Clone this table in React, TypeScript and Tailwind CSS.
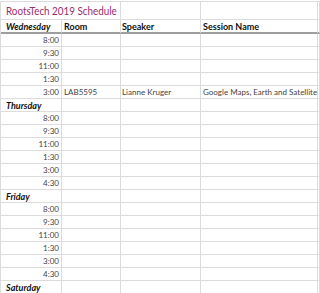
import React from "react";

type Row = { a: string; day?: boolean; b?: string; c?: string; d?: string };

const rows: Row[] = [
  { a: "8:00" },
  { a: "9:30" },
  { a: "11:00" },
  { a: "1:30" },
  { a: "3:00", b: "LAB5595", c: "Lianne Kruger", d: "Google Maps, Earth and Satellite" },
  { a: "Thursday", day: true },
  { a: "8:00" },
  { a: "9:30" },
  { a: "11:00" },
  { a: "1:30" },
  { a: "3:00" },
  { a: "4:30" },
  { a: "Friday", day: true },
  { a: "8:00" },
  { a: "9:30" },
  { a: "11:00" },
  { a: "1:30" },
  { a: "3:00" },
  { a: "4:30" },
  { a: "Saturday", day: true },
];

const cell = "border-r border-b border-[#dcdcdc] box-border overflow-visible whitespace-nowrap";
const hcell = "h-[14px] border-r border-[#dcdcdc] border-b-2 border-b-[#9e9e9e] flex items-center text-[9px] font-bold text-[#111] leading-none whitespace-nowrap";

export default function App() {
  return (
    <div
      className="w-[320px] h-[293px] overflow-hidden bg-white pt-[1px]"
      style={{ fontFamily: "Lato, 'Open Sans', sans-serif" }}
    >
      <div className="grid grid-cols-[61px_59px_80px_117px_1fr] border-t border-l border-[#dcdcdc]">
        {/* title row */}
        <div className={`col-span-2 h-[18px] ${cell} flex items-center pl-[5px] pt-[1px] leading-none`}>
          <span className="inline-block origin-left scale-x-[0.82] text-[12px] text-[#9c2d6b]">
            RootsTech 2019 Schedule
          </span>
        </div>
        <div className={`h-[18px] ${cell}`} />
        <div className={`h-[18px] ${cell}`} />
        <div className={`h-[18px] ${cell}`} />
        {/* header row */}
        <div className={`${hcell} pl-[5px] italic`}>Wednesday</div>
        <div className={`${hcell} pl-[2px]`}>Room</div>
        <div className={`${hcell} pl-[1px]`}>Speaker</div>
        <div className={`${hcell} pl-[2px]`}>Session Name</div>
        <div className="h-[14px] border-r border-[#dcdcdc] border-b-2 border-b-[#9e9e9e]" />
        {rows.map((r, i) => (
          <React.Fragment key={i}>
            {r.day ? (
              <div className={`h-[13px] ${cell} flex items-center pl-[5px] text-[9px] font-bold italic text-[#111] leading-none`}>
                {r.a}
              </div>
            ) : (
              <div className={`h-[13px] ${cell} flex items-center justify-end pr-[2px] text-[8px] text-[#444] leading-none`}>
                {r.a}
              </div>
            )}
            <div className={`h-[13px] ${cell} flex items-center pl-[2px] text-[8px] text-[#444] leading-none`}>
              {r.b ?? ""}
            </div>
            <div className={`h-[13px] ${cell} flex items-center pl-[1px] text-[8px] text-[#444] leading-none`}>
              {r.c ?? ""}
            </div>
            <div className={`h-[13px] ${cell} flex items-center pl-[2px] text-[8px] text-[#444] leading-none`}>
              {r.d ?? ""}
            </div>
            <div className={`h-[13px] ${cell}`} />
          </React.Fragment>
        ))}
      </div>
    </div>
  );
}
